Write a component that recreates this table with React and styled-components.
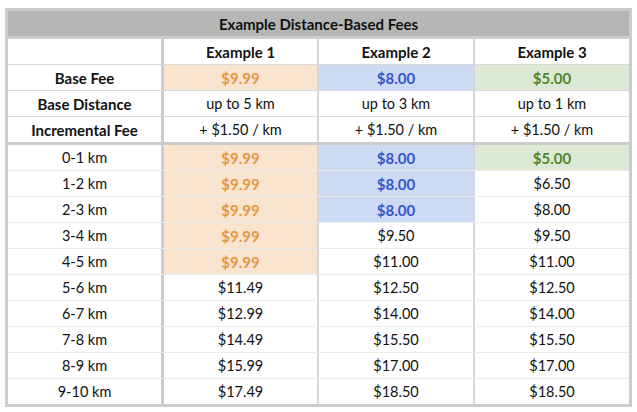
import React from 'react';
import styled, { createGlobalStyle } from 'styled-components';

const GlobalStyle = createGlobalStyle`
  html, body {
    margin: 0;
    padding: 0;
    background: #ffffff;
  }
  body {
    font-family: Lato, "Open Sans", "Liberation Sans", sans-serif;
    color: #111111;
  }
`;

const tints = {
  orange: { bg: '#f9e5cf', fg: '#e6963f' },
  blue: { bg: '#cddaf4', fg: '#3556cf' },
  green: { bg: '#dde9d5', fg: '#4e872b' },
};

const summary = [
  { label: 'Base Fee', cells: [['$9.99', 'orange'], ['$8.00', 'blue'], ['$5.00', 'green']] },
  { label: 'Base Distance', cells: [['up to 5 km'], ['up to 3 km'], ['up to 1 km']] },
  { label: 'Incremental Fee', cells: [['+ $1.50 / km'], ['+ $1.50 / km'], ['+ $1.50 / km']] },
];

const rows = [
  ['0-1 km', ['$9.99', 'orange'], ['$8.00', 'blue'], ['$5.00', 'green']],
  ['1-2 km', ['$9.99', 'orange'], ['$8.00', 'blue'], ['$6.50']],
  ['2-3 km', ['$9.99', 'orange'], ['$8.00', 'blue'], ['$8.00']],
  ['3-4 km', ['$9.99', 'orange'], ['$9.50'], ['$9.50']],
  ['4-5 km', ['$9.99', 'orange'], ['$11.00'], ['$11.00']],
  ['5-6 km', ['$11.49'], ['$12.50'], ['$12.50']],
  ['6-7 km', ['$12.99'], ['$14.00'], ['$14.00']],
  ['7-8 km', ['$14.49'], ['$15.50'], ['$15.50']],
  ['8-9 km', ['$15.99'], ['$17.00'], ['$17.00']],
  ['9-10 km', ['$17.49'], ['$18.50'], ['$18.50']],
];

const Frame = styled.div`
  margin: 8px 0 0 5px;
  width: 621px;
  border: 3px solid #cccccc;
  background: #ffffff;
`;

const Title = styled.div`
  height: 25px;
  display: flex;
  align-items: center;
  justify-content: center;
  background: #b6b6b6;
  border-bottom: 3px solid #cccccc;
  font-size: 15px;
  font-weight: 700;
`;

const Row = styled.div`
  display: grid;
  grid-template-columns: 156px 155px 156px 154px;
  height: 25px;
  border-bottom: ${(p) => p.$edge};
`;

const Cell = styled.div`
  display: flex;
  align-items: center;
  justify-content: center;
  font-size: ${(p) => (p.$bold ? '15px' : '14.5px')};
  font-weight: ${(p) => (p.$bold ? 700 : 400)};
  background: ${(p) => (p.$tint ? tints[p.$tint].bg : 'transparent')};
  color: ${(p) => (p.$tint ? tints[p.$tint].fg : '#111111')};
  border-right: ${(p) => p.$divider || 'none'};
`;

const dividers = ['3px solid #cccccc', '2px solid #d6d6d6', '2px solid #d6d6d6', 'none'];

const DataCells = ({ cells, bold }) =>
  cells.map(([text, tint], i) => (
    <Cell key={i} $tint={tint} $bold={bold || !!tint} $divider={dividers[i + 1]}>
      {text}
    </Cell>
  ));

const App = () => (
  <>
    <GlobalStyle />
    <Frame>
      <Title>Example Distance-Based Fees</Title>
      <Row $edge="1px solid #d8d8d8">
        <Cell $divider={dividers[0]} />
        <DataCells cells={[['Example 1'], ['Example 2'], ['Example 3']]} bold />
      </Row>
      {summary.map((r, i) => (
        <Row
          key={r.label}
          $edge={i === summary.length - 1 ? '3px solid #cccccc' : '1px solid #d8d8d8'}
        >
          <Cell $bold $divider={dividers[0]}>{r.label}</Cell>
          <DataCells cells={r.cells} />
        </Row>
      ))}
      {rows.map(([label, ...cells], i) => (
        <Row key={label} $edge={i === rows.length - 1 ? 'none' : '1px solid #ebebeb'}>
          <Cell $divider={dividers[0]}>{label}</Cell>
          <DataCells cells={cells} />
        </Row>
      ))}
    </Frame>
  </>
);

export default App;
